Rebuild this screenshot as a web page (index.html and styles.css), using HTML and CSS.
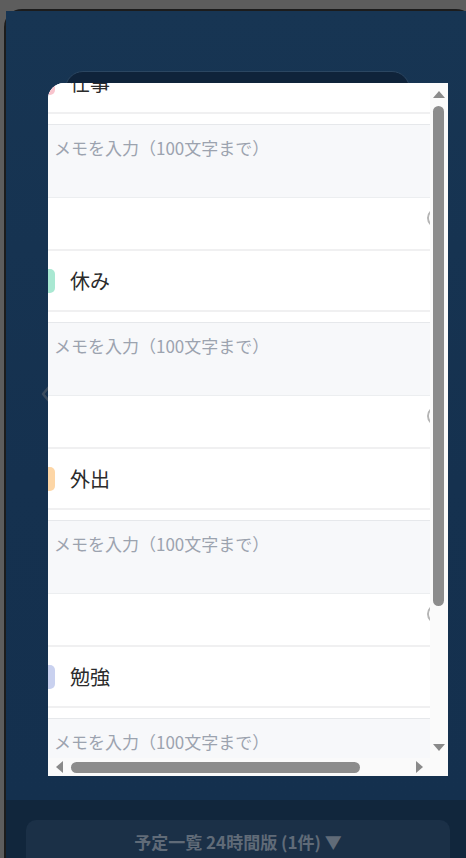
FILE: index.html
```html
<!DOCTYPE html>
<html lang="ja">
<head>
<meta charset="utf-8">
<title>予定一覧</title>
<link rel="stylesheet" href="styles.css">
</head>
<body>
<div class="screen">
  <div class="card">
    <main class="panel">
      <div class="carousel-frame"></div>
      <svg class="carousel-prev" width="10" height="18" viewBox="0 0 10 18" aria-hidden="true">
        <path d="M8 2 L2 9 L8 16" fill="none" stroke="#3b4c5f" stroke-width="2.6" stroke-linecap="round" stroke-linejoin="round"/>
      </svg>
    </main>
    <footer class="footer">
      <button class="list-toggle" type="button">予定一覧 24時間版 (1件) ▼</button>
    </footer>
  </div>

  <div class="modal">
    <div class="modal-view">
      <div class="sheet">
        <div class="entry">
          <div class="entry-head"><span class="swatch swatch-pink"></span><span class="entry-name">仕事</span></div>
          <textarea class="entry-memo" placeholder="メモを入力（100文字まで）"></textarea>
          <div class="entry-foot"><span class="radio"></span></div>
        </div>
        <div class="entry">
          <div class="entry-head"><span class="swatch swatch-mint"></span><span class="entry-name">休み</span></div>
          <textarea class="entry-memo" placeholder="メモを入力（100文字まで）"></textarea>
          <div class="entry-foot"><span class="radio"></span></div>
        </div>
        <div class="entry">
          <div class="entry-head"><span class="swatch swatch-peach"></span><span class="entry-name">外出</span></div>
          <textarea class="entry-memo" placeholder="メモを入力（100文字まで）"></textarea>
          <div class="entry-foot"><span class="radio"></span></div>
        </div>
        <div class="entry">
          <div class="entry-head"><span class="swatch swatch-lavender"></span><span class="entry-name">勉強</span></div>
          <textarea class="entry-memo" placeholder="メモを入力（100文字まで）"></textarea>
          <div class="entry-foot"><span class="radio"></span></div>
        </div>
      </div>
    </div>

    <div class="vbar">
      <span class="sb-btn sb-btn-v"><span class="tri tri-up"></span></span>
      <span class="vthumb"></span>
      <span class="sb-fill"></span>
      <span class="sb-btn sb-btn-v"><span class="tri tri-down"></span></span>
    </div>
    <div class="hbar">
      <span class="sb-btn sb-btn-h"><span class="tri tri-left"></span></span>
      <span class="hthumb"></span>
      <span class="sb-fill"></span>
      <span class="sb-btn sb-btn-h"><span class="tri tri-right"></span></span>
    </div>
    <div class="sb-corner"></div>
  </div>
</div>
</body>
</html>
```

FILE: styles.css
```css
html, body {
  margin: 0;
  padding: 0;
  width: 466px;
  height: 858px;
  overflow: hidden;
  background: #5d5d5d;
  font-family: "Noto Sans CJK JP", "Noto Sans", sans-serif;
}

.screen {
  position: relative;
  width: 466px;
  height: 858px;
  padding: 9px 0 0 4px;
  box-sizing: border-box;
}

.card {
  width: 470px;
  height: 849px;
  background: #1c1c1c;
  border-radius: 18px 18px 0 0;
  padding: 2px 0 0 2px;
  box-sizing: border-box;
  display: flex;
  flex-direction: column;
}

.panel {
  position: relative;
  flex: none;
  height: 789px;
  background: linear-gradient(180deg, #173553 0%, #15314f 60%, #14304e 100%);
  padding: 60px 0 0 59px;
  box-sizing: border-box;
}

.carousel-frame {
  width: 345px;
  height: 560px;
  border: 1px solid #2b4661;
  border-radius: 18px;
  background: #0f233a;
  box-sizing: border-box;
}

.carousel-prev {
  position: absolute;
  left: 35px;
  top: 374px;
}

.footer {
  flex: 1;
  background: #11263c;
  padding: 20px 0 0 20px;
  box-sizing: border-box;
}

.list-toggle {
  display: block;
  width: 424px;
  height: 48px;
  border: none;
  border-radius: 10px;
  background: #1b3047;
  color: #606b78;
  font-family: "Noto Sans CJK JP", "Noto Sans", sans-serif;
  font-size: 17px;
  font-weight: 700;
  padding: 0 0 6px;
  text-align: center;
}

/* modal with drawn scrollbars */
.modal {
  position: absolute;
  left: 48px;
  top: 83px;
  width: 400px;
  height: 693px;
  z-index: 5;
  display: grid;
  grid-template-columns: 382px 18px;
  grid-template-rows: 675px 18px;
  background: #ffffff;
  border-radius: 16px 0 0 0;
  overflow: hidden;
}

.modal-view {
  overflow: hidden;
  background: #ffffff;
}

.vbar {
  background: #fafafa;
  display: flex;
  flex-direction: column;
}
.hbar {
  background: #fafafa;
  display: flex;
  flex-direction: row;
  align-items: center;
}
.sb-corner {
  background: #fafafa;
}

.sb-btn {
  flex: none;
  display: flex;
  align-items: center;
  justify-content: center;
}
.sb-btn-v { height: 22px; }
.sb-btn-h { width: 22px; height: 18px; }
.sb-fill { flex: 1; }

.vthumb {
  display: block;
  margin: 1px 0 0 3px;
  width: 11px;
  height: 500px;
  border-radius: 6px;
  background: #8c8c8c;
}
.hthumb {
  display: block;
  margin: 1px 0 0 1px;
  width: 289px;
  height: 11px;
  border-radius: 6px;
  background: #8c8c8c;
}

.tri {
  display: block;
  width: 0;
  height: 0;
}
.tri-up {
  border-left: 6px solid transparent;
  border-right: 6px solid transparent;
  border-bottom: 7px solid #8a8a8a;
}
.tri-down {
  border-left: 6px solid transparent;
  border-right: 6px solid transparent;
  border-top: 7px solid #8a8a8a;
}
.tri-left {
  border-top: 6px solid transparent;
  border-bottom: 6px solid transparent;
  border-right: 7px solid #8a8a8a;
}
.tri-right {
  border-top: 6px solid transparent;
  border-bottom: 6px solid transparent;
  border-left: 7px solid #8a8a8a;
}

/* list content, offset as scrolled in the reference */
.sheet {
  width: 487px;
  margin: -30px 0 0 -33px;
}

.entry {
  display: flex;
  flex-direction: column;
}

.entry-head {
  height: 59px;
  border-bottom: 2px solid #f0f0f1;
  display: flex;
  align-items: center;
  gap: 15px;
  padding-left: 16px;
}

.swatch {
  width: 24px;
  height: 24px;
  border-radius: 5px;
  flex: none;
}
.swatch-pink { background: #f8c4cd; }
.swatch-mint { background: #a9e8d2; }
.swatch-peach { background: #fdd6a6; }
.swatch-lavender { background: #c9d1ef; }

.entry-name {
  font-size: 20px;
  color: #2b2b2b;
  line-height: 28px;
}

.entry-memo {
  display: block;
  margin: 10px 0 0 16px;
  width: 471px;
  height: 74px;
  box-sizing: border-box;
  border: none;
  border-top: 1px solid #e6e8eb;
  border-bottom: 1px solid #eceef0;
  background: #f7f8fa;
  padding: 11px 10px 0 23px;
  font-family: "Noto Sans CJK JP", "Noto Sans", sans-serif;
  font-size: 17px;
  line-height: 24px;
  color: #333;
  resize: none;
  outline: none;
}
.entry-memo::placeholder {
  color: #9ca3af;
  opacity: 1;
}

.entry-foot {
  height: 41px;
  border-bottom: 2px solid #f0f0f1;
  padding: 10px 0 0 412px;
}

.radio {
  display: block;
  width: 20px;
  height: 20px;
  box-sizing: border-box;
  border: 2px solid #b5b5b5;
  border-radius: 50%;
}
```
